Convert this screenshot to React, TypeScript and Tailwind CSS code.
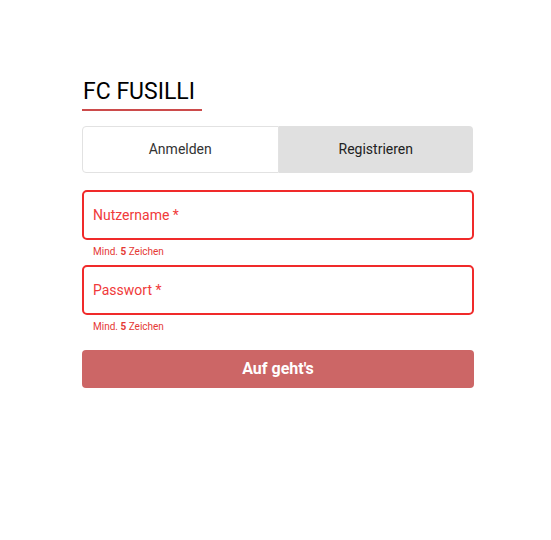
import React from "react";

export default function App() {
  const font = { fontFamily: "Roboto, 'Liberation Sans', sans-serif" };
  return (
    <div className="w-full min-h-[540px] bg-white" style={font}>
      <div className="ml-[82px] w-[392px] pt-[79px] flex flex-col">
        <div className="w-[120px] border-b-2 border-[#cc4b4b] pb-[4px] pl-[1px] text-[23px] leading-[26px] text-black">
          FC FUSILLI
        </div>
        <div className="mt-[15px] flex h-[47px] w-[391px]">
          <button className="flex-1 rounded-l-[4px] border border-[#e2e2e2] bg-white text-[14px] text-[#333]">
            Anmelden
          </button>
          <button className="flex-1 rounded-r-[4px] bg-[#e0e0e0] text-[14px] text-[#222]">
            Registrieren
          </button>
        </div>
        <div className="mt-[17px] flex h-[50px] items-center rounded-[5px] border-2 border-[#f02a2a] px-[9px]">
          <span className="text-[14px] text-[#f03a3a]">Nutzername *</span>
        </div>
        <div className="mt-[6px] pl-[11px] text-[10px] leading-[12px] text-[#e53935]">
          Mind. <b className="font-bold">5</b> Zeichen
        </div>
        <div className="mt-[7px] flex h-[50px] items-center rounded-[5px] border-2 border-[#f02a2a] px-[9px]">
          <span className="text-[14px] text-[#f03a3a]">Passwort *</span>
        </div>
        <div className="mt-[6px] pl-[11px] text-[10px] leading-[12px] text-[#e53935]">
          Mind. <b className="font-bold">5</b> Zeichen
        </div>
        <button className="mt-[17px] h-[38px] rounded-[4px] bg-[#cc6666] text-[16px] font-bold text-white">
          Auf geht's
        </button>
      </div>
    </div>
  );
}
